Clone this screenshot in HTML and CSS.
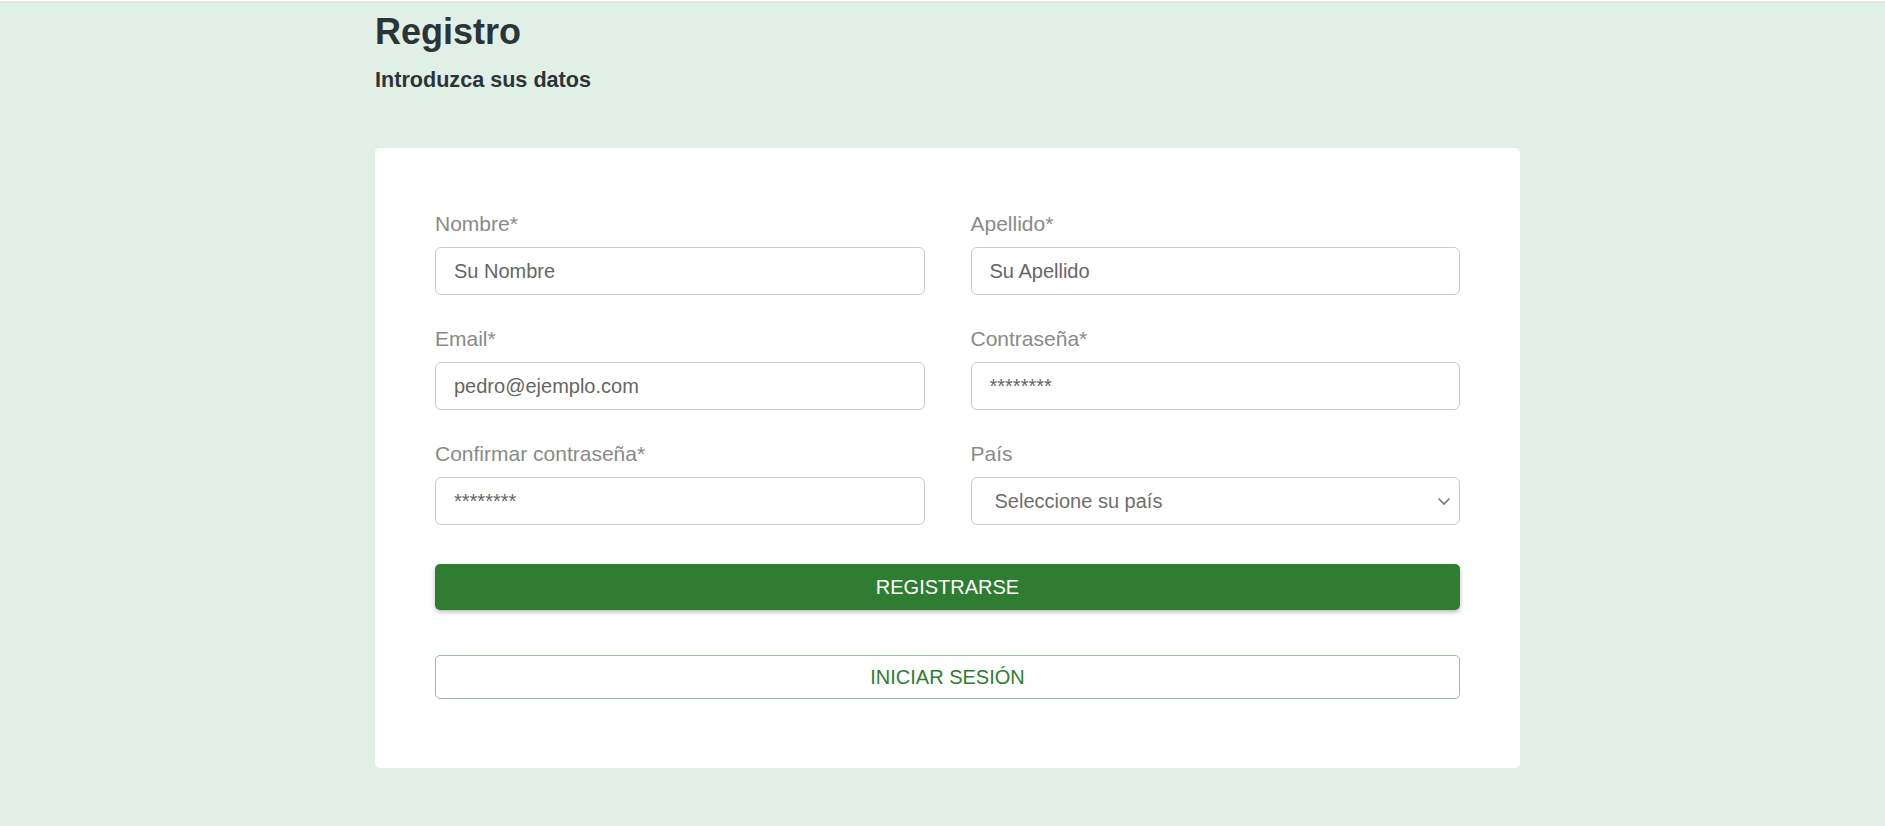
FILE: index.html
```html
<!DOCTYPE html>
<html lang="es">

<head>
    <meta charset="UTF-8">
    <meta name="viewport" content="width=device-width, initial-scale=1.0">
    <title>Registro</title>
    <link rel="stylesheet" href="styles.css">
</head>

<body>
    <div class="page">
        <h1 class="title">Registro</h1>
        <h3 class="subtitle">Introduzca sus datos</h3>

        <form class="card">
            <div class="fields">
                <div class="field">
                    <label for="nombre">Nombre*</label>
                    <input type="text" id="nombre" placeholder="Su Nombre">
                </div>
                <div class="field">
                    <label for="apellido">Apellido*</label>
                    <input type="text" id="apellido" placeholder="Su Apellido">
                </div>
                <div class="field">
                    <label for="email">Email*</label>
                    <input type="email" id="email" placeholder="pedro@ejemplo.com">
                </div>
                <div class="field">
                    <label for="pass">Contraseña*</label>
                    <input type="text" id="pass" placeholder="********">
                </div>
                <div class="field">
                    <label for="pass2">Confirmar contraseña*</label>
                    <input type="text" id="pass2" placeholder="********">
                </div>
                <div class="field">
                    <label for="pais">País</label>
                    <div class="select-wrap">
                        <select id="pais">
                            <option>Seleccione su país</option>
                        </select>
                        <svg class="chevron" width="14" height="9" viewBox="0 0 14 9">
                            <path d="M1.5 1.5 L7 7 L12.5 1.5" fill="none" stroke="#7a7a7a" stroke-width="1.6" />
                        </svg>
                    </div>
                </div>
            </div>

            <button type="button" class="btn btn-primary">REGISTRARSE</button>
            <button type="button" class="btn btn-outline">INICIAR SESIÓN</button>
        </form>
    </div>
</body>

</html>
```

FILE: styles.css
```css
html {
    background: #ffffff;
}

body {
    margin: 1px 0 0;
    min-height: calc(100vh - 1px);
    background: #e0f0e6;
    border-top: 2px solid #e2e4e3;
    box-sizing: border-box;
    font-family: "Liberation Sans", Arial, sans-serif;
}

.page {
    width: 1155px;
    margin: 0 auto;
    padding-left: 10px;
    box-sizing: border-box;
}

.title {
    margin: 8px 0 0;
    font-size: 36px;
    line-height: 41px;
    color: #2d3437;
}

.subtitle {
    margin: 15px 0 0;
    font-size: 21.6px;
    line-height: 25px;
    color: #2d3437;
}

.card {
    margin-top: 56px;
    background: #fff;
    border-radius: 5px;
    padding: 64px 60px 69px;
}

.fields {
    display: grid;
    grid-template-columns: 1fr 1fr;
    column-gap: 46px;
    row-gap: 32px;
}

.field label {
    display: block;
    font-size: 21px;
    line-height: 23px;
    color: #8a8a8a;
    margin-bottom: 12px;
}

.field input,
.field select {
    display: block;
    width: 100%;
    height: 48px;
    box-sizing: border-box;
    border: 1px solid #cdcdcd;
    border-radius: 6px;
    padding: 0 18px;
    font-family: "Liberation Sans", Arial, sans-serif;
    font-size: 20px;
    color: #666;
    background: #fff;
    outline: none;
}

.field input::placeholder {
    color: #666;
    opacity: 1;
}

.select-wrap {
    position: relative;
}

.field select {
    appearance: none;
    -webkit-appearance: none;
    padding-left: 23px;
    font-size: 20px;
    color: #6e6e6e;
}

.chevron {
    position: absolute;
    right: 9px;
    top: 20px;
}

.btn {
    display: block;
    width: 100%;
    box-sizing: border-box;
    border-radius: 5px;
    font-family: "Liberation Sans", Arial, sans-serif;
    font-size: 20px;
    cursor: pointer;
}

.btn-primary {
    margin-top: 39px;
    height: 46px;
    border: none;
    background: #2e7d32;
    color: #fff;
    box-shadow: 0 2px 4px rgba(0, 0, 0, 0.28);
}

.btn-outline {
    margin-top: 45px;
    height: 44px;
    border: 1px solid #98c09a;
    background: #fff;
    color: #2e7d32;
}
```
